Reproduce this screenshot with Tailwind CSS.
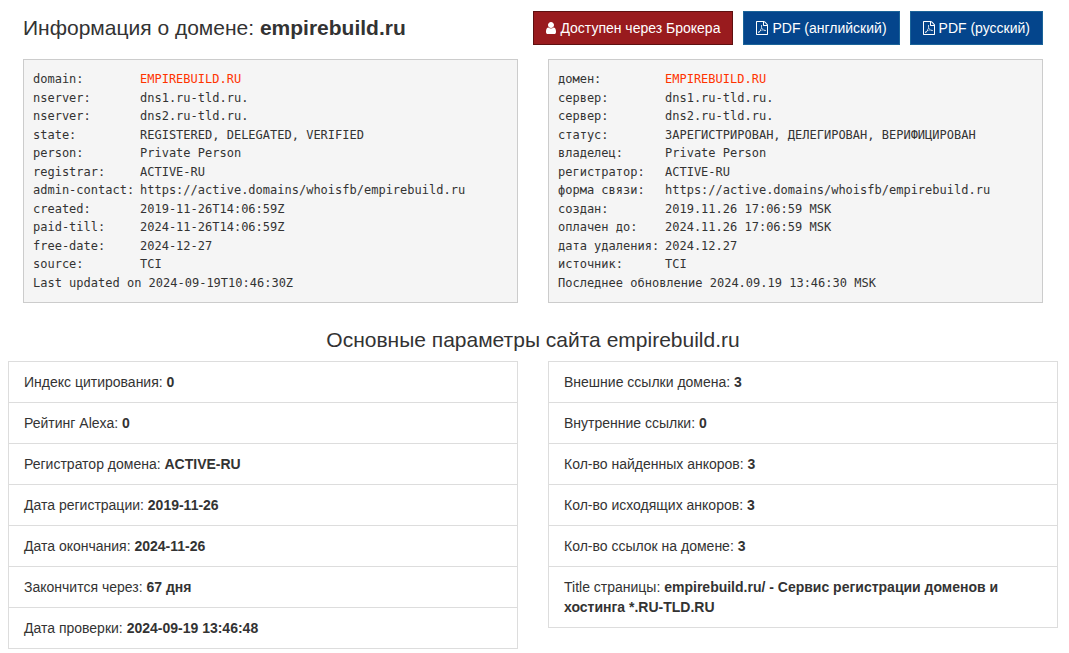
<!DOCTYPE html>
<html lang="ru">
<head>
<meta charset="utf-8">
<meta name="viewport" content="width=device-width, initial-scale=1">
<title>Информация о домене: empirebuild.ru</title>
<script src="https://cdn.jsdelivr.net/npm/@tailwindcss/browser@4"></script>
</head>
<body class="bg-white pl-2 pr-[11px] pt-[11px] pb-1 font-['Liberation_Sans',Arial,sans-serif] text-sm leading-5 text-[#333]">

<header class="flex items-center justify-between px-[15px]">
  <h1 class="text-[21px] leading-[34px]">Информация о домене: <b>empirebuild.ru</b></h1>
  <div class="flex gap-[10px]">
    <a href="#broker" class="flex h-[34px] items-center gap-1 border border-[#5e1010] bg-[#991b1e] px-3 whitespace-nowrap text-white">
      <svg class="h-3 w-[10px]" viewBox="0 128 1280 1536" fill="currentColor" aria-hidden="true"><path d="M1280 1399q0 109-62.500 187T1067 1664H213q-88 0-150.500-78T0 1399q0-85 8.500-160.500t31.500-152 58.500-131 94-89T327 832q131 128 313 128t313-128q76 0 134.500 34.500t94 89 58.500 131 31.500 152 8.500 160.500zm-256-887q0 159-112.500 271.500T640 896 368.500 783.500 256 512t112.500-271.500T640 128t271.500 112.500T1024 512z"/></svg>
      Доступен через Брокера</a>
    <a href="#pdf-en" class="flex h-[34px] items-center gap-1 border border-[#1b6499] bg-[#04458c] px-3 whitespace-nowrap text-white">
      <svg class="h-[14px] w-3" viewBox="0 0 1536 1792" fill="currentColor" aria-hidden="true"><path d="M1468 380q28 28 48 76t20 88v1152q0 40-28 68t-68 28H96q-40 0-68-28t-28-68V96q0-40 28-68T96 0h896q40 0 88 20t76 48zm-444-244v376h376q-10-29-22-41l-313-313q-12-12-41-22zm384 1528V640H992q-40 0-68-28t-28-68V128H128v1536zM894 1071q33 26 84 56 59-7 117-7 147 0 177 49 16 22 2 52 0 1-1 2l-2 2v1q-6 38-71 38-48 0-115-20t-130-53q-221 24-392 83-153 262-242 262-15 0-28-7l-24-12q-1-1-6-5-10-10-6-36 9-40 56-91.500t132-96.500q14-9 23 6 2 2 2 4 52-85 107-197 68-136 104-262-24-82-30.500-159.500T657 552q11-40 42-40h22q23 0 35 15 18 21 9 68-2 6-4 8 1 3 1 8v30q-2 123-14 192 55 164 146 238zm-576 411q52-24 137-158-51 40-87.500 84t-49.500 74zm398-920q-15 42-2 132 1-7 7-44 0-3 7-43 1-4 4-8-1-1-1-2t-1-2-1-2q-1-22-13-36 0 1-1 2zm-124 661q135-54 284-81-2-1-13-9.500t-16-13.500q-76-67-127-176-27 86-83 197-30 56-45 83zm646-16q-24-24-140-24 76 28 124 28 14 0 18-1 0-1-2-3z"/></svg>
      PDF (английский)</a>
    <a href="#pdf-ru" class="flex h-[34px] items-center gap-1 border border-[#1b6499] bg-[#04458c] px-3 whitespace-nowrap text-white">
      <svg class="h-[14px] w-3" viewBox="0 0 1536 1792" fill="currentColor" aria-hidden="true"><path d="M1468 380q28 28 48 76t20 88v1152q0 40-28 68t-68 28H96q-40 0-68-28t-28-68V96q0-40 28-68T96 0h896q40 0 88 20t76 48zm-444-244v376h376q-10-29-22-41l-313-313q-12-12-41-22zm384 1528V640H992q-40 0-68-28t-28-68V128H128v1536zM894 1071q33 26 84 56 59-7 117-7 147 0 177 49 16 22 2 52 0 1-1 2l-2 2v1q-6 38-71 38-48 0-115-20t-130-53q-221 24-392 83-153 262-242 262-15 0-28-7l-24-12q-1-1-6-5-10-10-6-36 9-40 56-91.500t132-96.500q14-9 23 6 2 2 2 4 52-85 107-197 68-136 104-262-24-82-30.500-159.500T657 552q11-40 42-40h22q23 0 35 15 18 21 9 68-2 6-4 8 1 3 1 8v30q-2 123-14 192 55 164 146 238zm-576 411q52-24 137-158-51 40-87.500 84t-49.500 74zm398-920q-15 42-2 132 1-7 7-44 0-3 7-43 1-4 4-8-1-1-1-2t-1-2-1-2q-1-22-13-36 0 1-1 2zm-124 661q135-54 284-81-2-1-13-9.500t-16-13.500q-76-67-127-176-27 86-83 197-30 56-45 83zm646-16q-24-24-140-24 76 28 124 28 14 0 18-1 0-1-2-3z"/></svg>
      PDF (русский)</a>
  </div>
</header>

<main>
  <section class="mt-[14px] grid grid-cols-2 gap-[30px] px-[15px] font-['DejaVu_Sans_Mono',monospace] text-xs leading-[18px]">
    <div class="grid min-h-[244px] grid-cols-[107px_1fr] content-between border border-[#ccc] bg-[#f5f5f5] px-[9px] py-[10px] whitespace-nowrap">
      <span>domain:</span><span class="text-[#ff3300]">EMPIREBUILD.RU</span>
      <span>nserver:</span><span>dns1.ru-tld.ru.</span>
      <span>nserver:</span><span>dns2.ru-tld.ru.</span>
      <span>state:</span><span>REGISTERED, DELEGATED, VERIFIED</span>
      <span>person:</span><span>Private Person</span>
      <span>registrar:</span><span>ACTIVE-RU</span>
      <span>admin-contact:</span><span>https://active.domains/whoisfb/empirebuild.ru</span>
      <span>created:</span><span>2019-11-26T14:06:59Z</span>
      <span>paid-till:</span><span>2024-11-26T14:06:59Z</span>
      <span>free-date:</span><span>2024-12-27</span>
      <span>source:</span><span>TCI</span>
      <p class="col-span-2">Last updated on 2024-09-19T10:46:30Z</p>
    </div>
    <div class="grid min-h-[244px] grid-cols-[107px_1fr] content-between border border-[#ccc] bg-[#f5f5f5] px-[9px] py-[10px] whitespace-nowrap">
      <span>домен:</span><span class="text-[#ff3300]">EMPIREBUILD.RU</span>
      <span>сервер:</span><span>dns1.ru-tld.ru.</span>
      <span>сервер:</span><span>dns2.ru-tld.ru.</span>
      <span>статус:</span><span>ЗАРЕГИСТРИРОВАН, ДЕЛЕГИРОВАН, ВЕРИФИЦИРОВАН</span>
      <span>владелец:</span><span>Private Person</span>
      <span>регистратор:</span><span>ACTIVE-RU</span>
      <span>форма связи:</span><span>https://active.domains/whoisfb/empirebuild.ru</span>
      <span>создан:</span><span>2019.11.26 17:06:59 MSK</span>
      <span>оплачен до:</span><span>2024.11.26 17:06:59 MSK</span>
      <span>дата удаления:</span><span>2024.12.27</span>
      <span>источник:</span><span>TCI</span>
      <p class="col-span-2">Последнее обновление 2024.09.19 13:46:30 MSK</p>
    </div>
  </section>

  <h2 class="mt-[25px] mb-[9px] text-center text-[21px] leading-6">Основные параметры сайта empirebuild.ru</h2>

  <section class="grid grid-cols-2 items-start gap-[30px]">
    <ul class="divide-y divide-[#ddd] border border-[#ddd]">
      <li class="px-[15px] py-[10px]">Индекс цитирования: <b>0</b></li>
      <li class="px-[15px] py-[10px]">Рейтинг Alexa: <b>0</b></li>
      <li class="px-[15px] py-[10px]">Регистратор домена: <b>ACTIVE-RU</b></li>
      <li class="px-[15px] py-[10px]">Дата регистрации: <b>2019-11-26</b></li>
      <li class="px-[15px] py-[10px]">Дата окончания: <b>2024-11-26</b></li>
      <li class="px-[15px] py-[10px]">Закончится через: <b>67 дня</b></li>
      <li class="px-[15px] py-[10px]">Дата проверки: <b>2024-09-19 13:46:48</b></li>
    </ul>
    <ul class="divide-y divide-[#ddd] border border-[#ddd]">
      <li class="px-[15px] py-[10px]">Внешние ссылки домена: <b>3</b></li>
      <li class="px-[15px] py-[10px]">Внутренние ссылки: <b>0</b></li>
      <li class="px-[15px] py-[10px]">Кол-во найденных анкоров: <b>3</b></li>
      <li class="px-[15px] py-[10px]">Кол-во исходящих анкоров: <b>3</b></li>
      <li class="px-[15px] py-[10px]">Кол-во ссылок на домене: <b>3</b></li>
      <li class="px-[15px] py-[10px]">Title страницы: <b>empirebuild.ru/ - Сервис регистрации доменов и хостинга *.RU-TLD.RU</b></li>
    </ul>
  </section>
</main>
</body>
</html>
